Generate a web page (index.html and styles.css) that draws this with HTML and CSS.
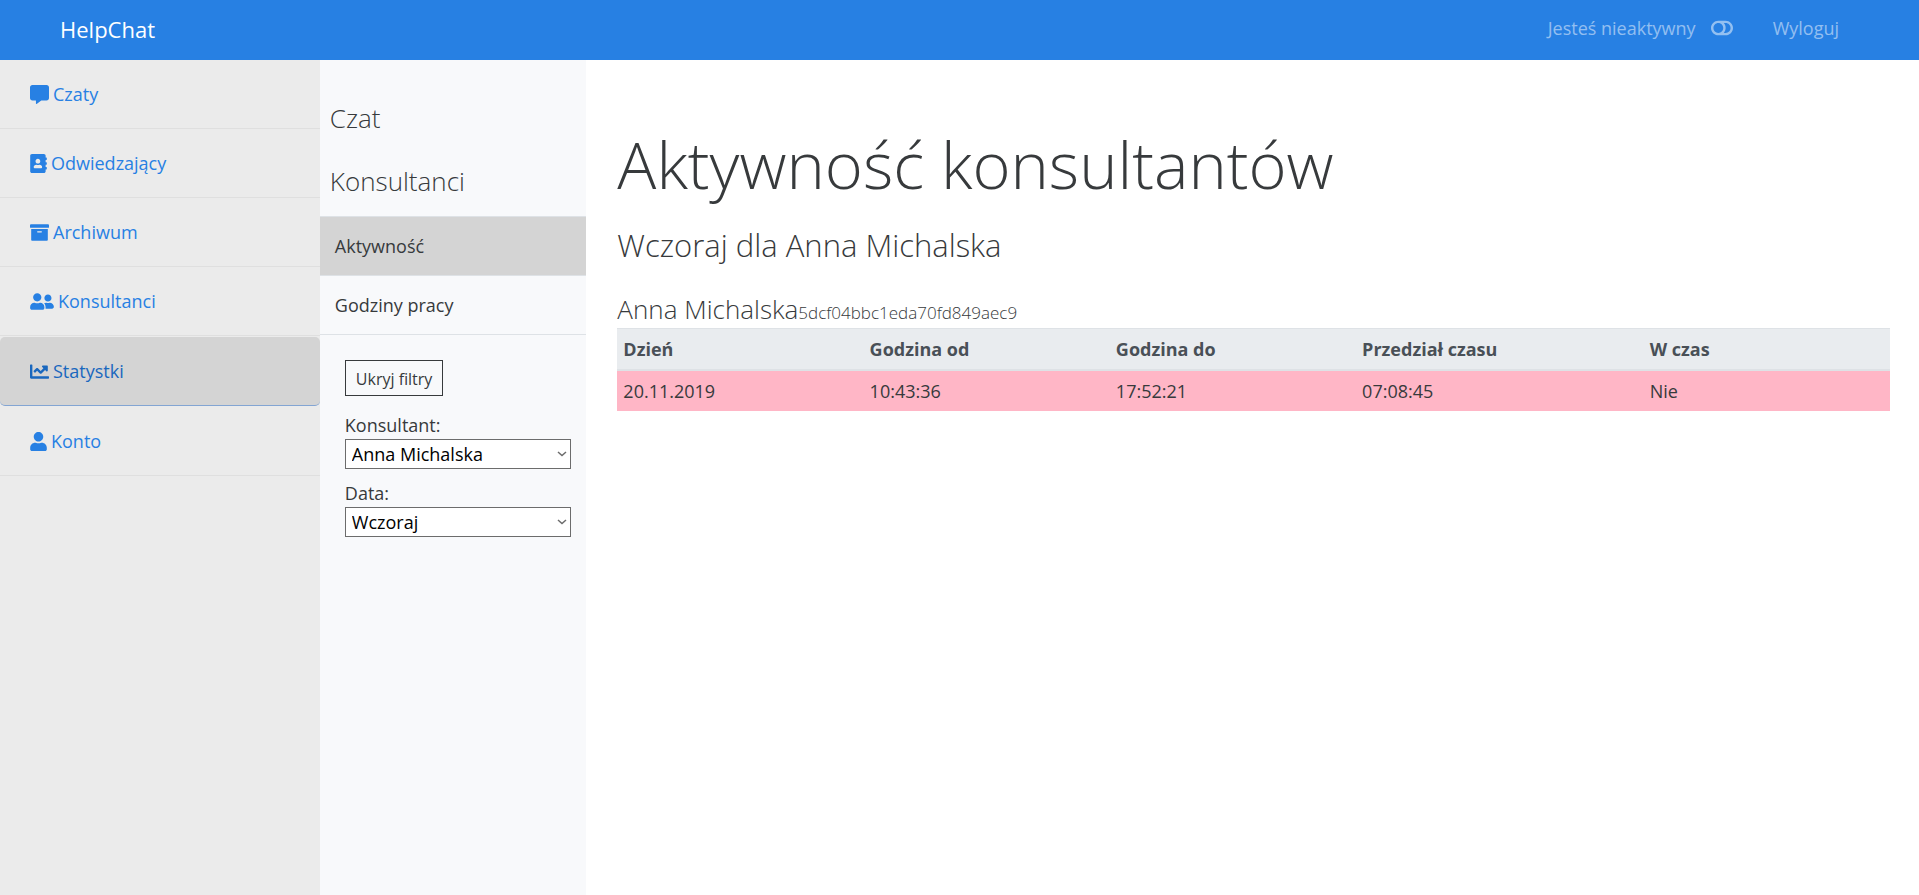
FILE: index.html
```html
<!DOCTYPE html>
<html lang="pl">
<head>
<meta charset="utf-8">
<title>HelpChat</title>
<link rel="stylesheet" href="styles.css">
</head>
<body>
<header class="topbar">
  <a class="brand" href="#">HelpChat</a>
  <nav class="topnav">
    <a class="toplink" href="#">Jesteś nieaktywny
      <svg class="toggle" viewBox="0 0 576 512" aria-hidden="true"><path d="M384 64H192C85.961 64 0 149.961 0 256s85.961 192 192 192h192c106.039 0 192-85.961 192-192S490.039 64 384 64zM64 256c0-70.741 57.249-128 128-128 70.741 0 128 57.249 128 128 0 70.741-57.249 128-128 128-70.741 0-128-57.249-128-128zm320 128h-48.905c65.217-72.858 65.236-183.12 0-256H384c70.741 0 128 57.249 128 128 0 70.74-57.249 128-128 128z"/></svg>
    </a>
    <a class="toplink" href="#">Wyloguj</a>
  </nav>
</header>
<div class="layout">
  <nav class="sidebar">
    <a class="side-item" href="#"><svg class="icon" viewBox="0 0 512 512" aria-hidden="true"><path d="M448 0H64C28.7 0 0 28.7 0 64v288c0 35.3 28.7 64 64 64h96v84c0 9.8 11.2 15.5 19.1 9.7L304 416h144c35.3 0 64-28.7 64-64V64c0-35.3-28.7-64-64-64z"/></svg>Czaty</a>
    <a class="side-item" href="#"><svg class="icon icon-narrow" viewBox="0 0 448 512" aria-hidden="true"><path d="M436 160c6.6 0 12-5.4 12-12v-40c0-6.600-5.400-12-12-12h-20V48c0-26.500-21.500-48-48-48H48C21.500 0 0 21.500 0 48v416c0 26.500 21.500 48 48 48h320c26.500 0 48-21.500 48-48v-48h20c6.600 0 12-5.400 12-12v-40c0-6.600-5.400-12-12-12h-20v-64h20c6.600 0 12-5.400 12-12v-40c0-6.600-5.400-12-12-12h-20v-64h20zm-228-32c35.300 0 64 28.700 64 64s-28.700 64-64 64-64-28.700-64-64 28.700-64 64-64zm112 236.800c0 10.600-10 19.200-22.400 19.200H118.400C106 384 96 375.400 96 364.800v-19.200c0-31.800 30.100-57.600 67.200-57.600h5c12.300 5.100 25.700 8 39.800 8s27.600-2.900 39.800-8h5c37.100 0 67.200 25.800 67.200 57.600v19.200z"/></svg>Odwiedzający</a>
    <a class="side-item" href="#"><svg class="icon" viewBox="0 0 512 512" aria-hidden="true"><path d="M32 448c0 17.700 14.300 32 32 32h384c17.700 0 32-14.300 32-32V160H32v288zm160-212c0-6.600 5.400-12 12-12h104c6.600 0 12 5.400 12 12v8c0 6.600-5.400 12-12 12H204c-6.600 0-12-5.400-12-12v-8zM480 32H32C14.300 32 0 46.300 0 64v48c0 8.800 7.200 16 16 16h480c8.800 0 16-7.200 16-16V64c0-17.700-14.300-32-32-32z"/></svg>Archiwum</a>
    <a class="side-item" href="#"><svg class="icon icon-wide" viewBox="0 0 640 512" aria-hidden="true"><path d="M192 256c61.900 0 112-50.100 112-112S253.900 32 192 32 80 82.100 80 144s50.100 112 112 112zm76.800 32h-8.300c-20.800 10-43.900 16-68.500 16s-47.600-6-68.500-16h-8.300C51.600 288 0 339.600 0 403.200V432c0 26.500 21.500 48 48 48h288c26.500 0 48-21.500 48-48v-28.800c0-63.600-51.600-115.200-115.200-115.200zM480 256c53 0 96-43 96-96s-43-96-96-96-96 43-96 96 43 96 96 96zm48 32h-3.800c-13.900 4.800-28.600 8-44.200 8s-30.300-3.200-44.200-8H432c-20.400 0-39.200 5.900-55.700 15.400 24.400 26.300 39.700 61.200 39.700 99.800v38.400c0 2.200-.5 4.300-.6 6.400H592c26.500 0 48-21.500 48-48 0-61.900-50.100-112-112-112z"/></svg>Konsultanci</a>
    <a class="side-item side-item-active" href="#" aria-current="page"><svg class="icon" viewBox="0 0 512 512" aria-hidden="true"><path d="M496 384H64V80c0-8.840-7.160-16-16-16H16C7.160 64 0 71.160 0 80v336c0 17.670 14.330 32 32 32h464c8.840 0 16-7.160 16-16v-32c0-8.840-7.160-16-16-16zM464 96H345.940c-21.380 0-32.090 25.850-16.970 40.970l32.400 32.400L288 242.750l-73.370-73.370c-12.500-12.500-32.760-12.500-45.250 0l-68.690 68.690c-6.250 6.250-6.250 16.380 0 22.630l22.620 22.620c6.250 6.250 16.380 6.250 22.630 0L192 237.250l73.370 73.370c12.500 12.500 32.760 12.500 45.250 0l96-96 32.400 32.400c15.120 15.120 40.970 4.410 40.970-16.970V112c.01-8.840-7.150-16-15.990-16z"/></svg>Statystki</a>
    <a class="side-item" href="#"><svg class="icon icon-narrow" viewBox="0 0 448 512" aria-hidden="true"><path d="M224 256c70.700 0 128-57.300 128-128S294.700 0 224 0 96 57.300 96 128s57.300 128 128 128zm89.600 32h-16.700c-22.200 10.200-46.900 16-72.900 16s-50.600-5.800-72.900-16h-16.700C60.200 288 0 348.200 0 422.400V464c0 26.500 21.500 48 48 48h352c26.500 0 48-21.500 48-48v-41.600c0-74.200-60.200-134.400-134.400-134.400z"/></svg>Konto</a>
  </nav>
  <aside class="panel">
    <h2 class="panel-title">Czat</h2>
    <h2 class="panel-title">Konsultanci</h2>
    <nav class="panel-nav">
      <a class="panel-item panel-item-active" href="#" aria-current="page">Aktywność</a>
      <a class="panel-item" href="#">Godziny pracy</a>
    </nav>
    <form class="filters">
      <button class="filter-button" type="button">Ukryj filtry</button>
      <div class="field">
        <label for="consultant">Konsultant:</label>
        <div class="select-box">
          <select id="consultant"><option>Anna Michalska</option></select>
          <svg class="chevron" viewBox="0 0 10 6" aria-hidden="true"><path d="M1 1l4 3.500L9 1"/></svg>
        </div>
      </div>
      <div class="field">
        <label for="date">Data:</label>
        <div class="select-box">
          <select id="date"><option>Wczoraj</option></select>
          <svg class="chevron" viewBox="0 0 10 6" aria-hidden="true"><path d="M1 1l4 3.500L9 1"/></svg>
        </div>
      </div>
    </form>
  </aside>
  <main class="content">
    <h1 class="title">Aktywność konsultantów</h1>
    <h2 class="subtitle">Wczoraj dla Anna Michalska</h2>
    <h3 class="person">Anna Michalska<small class="person-id">5dcf04bbc1eda70fd849aec9</small></h3>
    <table class="report">
      <colgroup><col class="col"><col class="col"><col class="col"><col class="col-wide"><col class="col"></colgroup>
      <thead>
        <tr><th>Dzień</th><th>Godzina od</th><th>Godzina do</th><th>Przedział czasu</th><th>W czas</th></tr>
      </thead>
      <tbody>
        <tr><td>20.11.2019</td><td>10:43:36</td><td>17:52:21</td><td>07:08:45</td><td>Nie</td></tr>
      </tbody>
    </table>
  </main>
</div>
</body>
</html>
```
FILE: styles.css
```css
* {
  box-sizing: border-box;
}

body {
  display: flex;
  flex-direction: column;
  min-height: 100vh;
  margin: 0;
  background: #fff;
  color: #373a3c;
  font-family: "Open Sans", "Noto Sans", sans-serif;
  font-size: 18px;
  font-weight: 400;
  line-height: 28px;
}

a {
  color: inherit;
  text-decoration: none;
}

.topbar {
  display: flex;
  align-items: center;
  justify-content: space-between;
  height: 60px;
  padding: 0 80px 2px 60px;
  background: #2780e3;
}

.brand {
  color: #fff;
  font-size: 22px;
}

.topnav {
  display: flex;
  gap: 40px;
  padding-bottom: 2px;
}

.toplink {
  display: flex;
  align-items: center;
  gap: 15px;
  color: rgba(255, 255, 255, 0.5);
}

.toggle {
  width: 22px;
  height: 20px;
  fill: currentColor;
}

.layout {
  display: grid;
  flex: 1;
  grid-template-columns: 6fr 5fr 25fr;
}

.sidebar {
  background: #ebebeb;
}

.side-item {
  display: flex;
  align-items: center;
  gap: 4px;
  height: 69px;
  padding: 0 30px;
  border-bottom: 1px solid #dfdfdf;
  color: #2780e3;
}

.side-item-active {
  margin: 1px 0;
  border-bottom-color: #83a5d3;
  border-radius: 5px;
  background: #d4d4d4;
  color: #1967be;
}

.icon {
  width: 19px;
  height: 19px;
  fill: currentColor;
}

.icon-narrow {
  width: 17px;
}

.icon-wide {
  width: 24px;
}

.panel {
  padding-top: 27px;
  background: #f8f9fb;
}

.panel-title {
  margin: 0;
  padding: 16px 10px;
  font-size: 26px;
  font-weight: 300;
  line-height: 31px;
}

.panel-nav {
  margin-top: 3px;
  border-top: 1px solid #dee2e6;
}

.panel-item {
  display: block;
  padding: 15px;
  border-bottom: 1px solid #dee2e6;
}

.panel-item-active {
  background: #d4d4d4;
}

.filters {
  display: flex;
  flex-direction: column;
  align-items: flex-start;
  gap: 10px;
  padding: 25px 15px 25px 25px;
}

.filter-button {
  height: 36px;
  margin-bottom: 5px;
  padding: 2px 10px 0;
  border: 1px solid #373a3c;
  background: transparent;
  color: inherit;
  font: inherit;
  font-size: 16px;
}

.field {
  width: 100%;
}

.field label {
  display: block;
}

.select-box {
  position: relative;
}

.select-box select {
  display: block;
  width: 100%;
  height: 30px;
  padding: 0 6px;
  border: 1px solid #6c6c6c;
  border-radius: 0;
  background: #fff;
  color: #000;
  font: inherit;
  appearance: none;
}

.chevron {
  position: absolute;
  top: 12px;
  right: 4px;
  width: 10px;
  height: 6px;
  fill: none;
  stroke: #6c6c6c;
  stroke-width: 1.5;
  pointer-events: none;
}

.content {
  padding: 60px 29px 60px 31px;
}

.title {
  margin: 0 0 12px;
  font-size: 65px;
  font-weight: 300;
  line-height: 88px;
}

.subtitle {
  margin: 0 0 24px;
  font-size: 31px;
  font-weight: 300;
  line-height: 50px;
}

.person {
  margin: 0;
  font-size: 26px;
  font-weight: 300;
  line-height: 30px;
}

.person-id {
  font-size: 17px;
}

.report {
  width: 100%;
  border-collapse: collapse;
  table-layout: fixed;
}

.col {
  width: 19.35%;
}

.col-wide {
  width: 22.6%;
}

.report th,
.report td {
  padding: 6px;
  text-align: left;
}

.report th {
  border-top: 1px solid #dee2e6;
  border-bottom: 2px solid #dee2e6;
  background: #e9ecef;
  color: #495057;
  font-weight: 700;
}

.report td {
  background: #ffb6c6;
}
```
